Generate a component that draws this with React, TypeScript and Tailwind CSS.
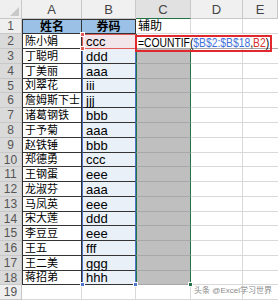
import clsx from 'clsx';

const rows = [
  ['陈小娟', 'ccc'],
  ['丁聪明', 'ddd'],
  ['丁美丽', 'aaa'],
  ['刘翠花', 'iii'],
  ['詹姆斯下士', 'jjj'],
  ['诸葛钢铁', 'bbb'],
  ['于予菊', 'aaa'],
  ['赵铁锤', 'bbb'],
  ['郑德勇', 'ccc'],
  ['王钢蛋', 'eee'],
  ['龙淑芬', 'aaa'],
  ['马凤英', 'eee'],
  ['宋大莲', 'ddd'],
  ['李豆豆', 'eee'],
  ['王五', 'fff'],
  ['王二美', 'ggg'],
  ['蒋招弟', 'hhh'],
];

const font = 'font-["Liberation_Sans","Noto_Sans_CJK_SC",sans-serif]';

// row 1..18 heights, a few rows are a pixel shorter (scaled screenshot)
const heightOf = (r: number) => ([5, 10, 14, 18].includes(r) ? 'h-[14px]' : 'h-[15px]');

function RowHead({ n, active, h }: { n: number; active?: boolean; h: string }) {
  return (
    <div
      className={clsx(
        'flex w-[22px] shrink-0 items-center justify-center border-b border-r border-[#c8c8c8] text-[12px] leading-none text-[#555]',
        active ? 'bg-[#dadada]' : 'bg-[#efefef]',
        h,
      )}
    >
      {n}
    </div>
  );
}

function Handle({ className }: { className: string }) {
  return <div className={clsx('pointer-events-none absolute h-[5px] w-[5px] border border-white', className)} />;
}

export default function App() {
  return (
    <div className={clsx('relative h-[300px] w-[278px] overflow-hidden bg-white', font)}>
      {/* column headers */}
      <div className="flex h-[19px]">
        <div className="relative w-[22px] shrink-0 border-b border-r border-[#c8c8c8] bg-[#efefef]">
          <svg className="absolute left-0 top-0" width="22" height="19">
            <polygon points="19,7 19,16 10,16" fill="#c9c9c9" />
          </svg>
        </div>
        {[
          ['A', 'w-[60px]'],
          ['B', 'w-[54px]'],
          ['C', 'w-[55px]'],
          ['D', 'w-[52px]'],
          ['E', 'flex-1'],
        ].map(([l, w]) => (
          <div
            key={l}
            className={clsx(
              'flex shrink-0 items-center justify-center border-b border-r border-[#c8c8c8] text-[13px] leading-none text-[#444]',
              w,
              l === 'C' ? 'border-b-[#217346] bg-[#e1e1e1]' : 'bg-[#f0f0f0]',
            )}
          >
            {l}
          </div>
        ))}
      </div>

      {/* row 1 */}
      <div className={clsx('flex', heightOf(1))}>
        <RowHead n={1} h={heightOf(1)} />
        <div className="flex w-[60px] shrink-0 items-center justify-center border border-[#333] bg-[#9bc2e6] text-[12px] font-bold leading-none">
          姓名
        </div>
        <div className="flex w-[54px] shrink-0 items-center justify-center border-b border-r border-t border-[#333] bg-[#9bc2e6] text-[12px] font-bold leading-none">
          券码
        </div>
        <div className="flex w-[55px] shrink-0 items-center border-b border-r border-[#d9d9d9] pl-[2px] text-[12px] leading-none">
          辅助
        </div>
        <div className="w-[52px] shrink-0 border-b border-r border-[#d9d9d9]" />
        <div className="flex-1 border-b border-[#d9d9d9]" />
      </div>

      {rows.map(([name, code], i) => {
        const r = i + 2;
        const h = heightOf(r);
        const last = r === 18;
        return (
          <div key={r} className={clsx('relative flex', h)}>
            <RowHead n={r} h={h} active />
            <div className="flex w-[60px] shrink-0 items-center overflow-hidden whitespace-nowrap border-b border-l border-r border-[#333] pl-[2px] text-[11px] leading-none text-black">
              {name}
            </div>
            <div
              className={clsx(
                'flex w-[54px] shrink-0 items-center border-b border-l border-r pl-[3px] text-[13px] leading-none text-black',
                r === 2
                  ? 'border-[#e05a5a] border-t bg-[#f3e6ea]'
                  : 'border-b-[#333] border-l-[#4f74cc] border-r-[#4f74cc] bg-[#eaf0f8]',
                last && 'border-b-[#4f74cc]',
              )}
            >
              {code}
            </div>
            {r === 2 ? (
              <div className="flex flex-1 items-center whitespace-nowrap border-b border-l border-[#217346] border-b-[#a8a8a8] pl-[1px] pt-[3px] text-[12px] leading-none text-black">
                <span className="origin-left scale-x-[0.86]">
                  =COUNTIF(<span className="text-[#3f6fd8]">$B$2:$B$18</span>,<span className="text-[#d9312f]">B2</span>)
                </span>
              </div>
            ) : (
              <>
                <div
                  className={clsx(
                    'w-[55px] shrink-0 border-b border-l border-r border-[#217346] border-b-[#a8a8a8] bg-[#bfbfbf]',
                    last && 'border-b-[#217346]',
                  )}
                />
                <div className="w-[52px] shrink-0 border-b border-r border-[#d9d9d9]" />
                <div className="flex-1 border-b border-[#d9d9d9]" />
              </>
            )}
          </div>
        );
      })}

      {/* row 19 */}
      <div className="flex h-[15px]">
        <RowHead n={19} h="h-[15px]" />
        <div className="w-[60px] shrink-0 border-b border-r border-[#d9d9d9]" />
        <div className="w-[54px] shrink-0 border-b border-r border-[#d9d9d9]" />
        <div className="w-[55px] shrink-0 border-b border-r border-[#d9d9d9]" />
        <div className="w-[52px] shrink-0 border-b border-r border-[#d9d9d9]" />
        <div className="flex-1 border-b border-[#d9d9d9]" />
      </div>

      {/* formula annotation box */}
      <div className="pointer-events-none absolute left-[135px] top-[35px] h-[17px] w-[137px] border-2 border-[#e0282e]" />

      {/* range handles */}
      <Handle className="left-[80px] top-[32px] bg-[#e05a5a]" />
      <Handle className="left-[80px] top-[46px] bg-[#e05a5a]" />
      <Handle className="left-[80px] top-[282px] bg-[#4f74cc]" />
      <Handle className="left-[133px] top-[282px] bg-[#4f74cc]" />
      <Handle className="left-[188px] top-[282px] bg-[#217346]" />

      <div className="pointer-events-none absolute bottom-[5px] right-[6px] text-[8px] leading-none text-[#8a8a8a]">
        头条 @Excel学习世界
      </div>
    </div>
  );
}
